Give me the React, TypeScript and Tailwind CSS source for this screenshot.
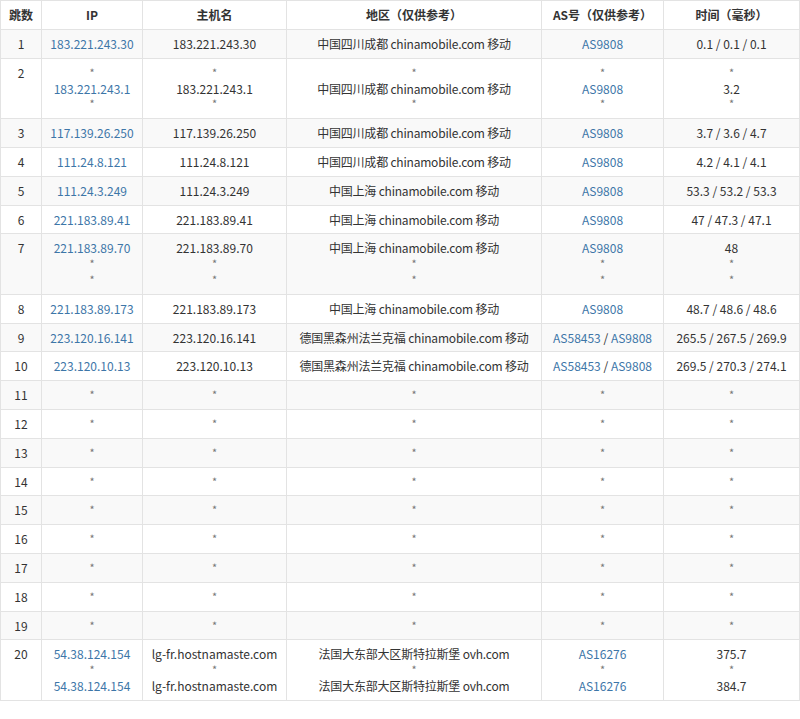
const S = "*";
type Cell = string[];
type Row = { n: number; ip: Cell; host: Cell; region: Cell; as: (string[] | string)[]; time: Cell };
const r1 = (ip: string, host: string, region: string, as: string[] | string, time: string): Row => ({ n: 0, ip: [ip], host: [host], region: [region], as: [as], time: [time] });
const CD = "中国四川成都 chinamobile.com 移动";
const SH = "中国上海 chinamobile.com 移动";
const DE = "德国黑森州法兰克福 chinamobile.com 移动";
const FR = "法国大东部大区斯特拉斯堡 ovh.com";
const rows: Row[] = [
  r1("183.221.243.30", "183.221.243.30", CD, ["AS9808"], "0.1 / 0.1 / 0.1"),
  { n: 0, ip: [S, "183.221.243.1", S], host: [S, "183.221.243.1", S], region: [S, CD, S], as: [S, ["AS9808"], S], time: [S, "3.2", S] },
  r1("117.139.26.250", "117.139.26.250", CD, ["AS9808"], "3.7 / 3.6 / 4.7"),
  r1("111.24.8.121", "111.24.8.121", CD, ["AS9808"], "4.2 / 4.1 / 4.1"),
  r1("111.24.3.249", "111.24.3.249", SH, ["AS9808"], "53.3 / 53.2 / 53.3"),
  r1("221.183.89.41", "221.183.89.41", SH, ["AS9808"], "47 / 47.3 / 47.1"),
  { n: 0, ip: ["221.183.89.70", S, S], host: ["221.183.89.70", S, S], region: [SH, S, S], as: [["AS9808"], S, S], time: ["48", S, S] },
  r1("221.183.89.173", "221.183.89.173", SH, ["AS9808"], "48.7 / 48.6 / 48.6"),
  r1("223.120.16.141", "223.120.16.141", DE, ["AS58453", "AS9808"], "265.5 / 267.5 / 269.9"),
  r1("223.120.10.13", "223.120.10.13", DE, ["AS58453", "AS9808"], "269.5 / 270.3 / 274.1"),
  ...Array.from({ length: 9 }, () => r1(S, S, S, S, S)),
  { n: 0, ip: ["54.38.124.154", S, "54.38.124.154"], host: ["lg-fr.hostnamaste.com", S, "lg-fr.hostnamaste.com"], region: [FR, S, FR], as: [["AS16276"], S, ["AS16276"]], time: ["375.7", S, "384.7"] },
];

const Lines = ({ c, link }: { c: Cell; link?: boolean }) => (
  <>
    {c.map((t, i) => (
      <div key={i} className={t === S ? "text-[#777] text-[11px]" : link ? "text-[#3d76a8]" : ""}>{t}</div>
    ))}
  </>
);

const td = "border border-[#e3e3e3] px-2 pt-[6px] pb-[6px] align-top text-center leading-[15.8px]";

export default function App() {
  return (
    <div className="w-[800px] h-[719px] bg-white overflow-hidden" style={{ fontFamily: '"Noto Sans CJK SC", "Noto Sans", sans-serif' }}>
      <table className="w-[800px] border-collapse text-[12px] text-[#333] table-fixed">
        <colgroup>
          <col className="w-[41px]" /><col className="w-[101px]" /><col className="w-[144px]" /><col className="w-[255px]" /><col className="w-[122px]" /><col />
        </colgroup>
        <thead>
          <tr className="h-[29px]">
            {["跳数", "IP", "主机名", "地区（仅供参考）", "AS号（仅供参考）", "时间（毫秒）"].map((h) => (
              <th key={h} className="border border-[#e3e3e3] font-bold text-center px-1">{h}</th>
            ))}
          </tr>
        </thead>
        <tbody>
          {rows.map((r, i) => (
            <tr key={i} className={i % 2 === 0 ? "bg-[#f9f9f9]" : "bg-white"}>
              <td className={td}>{i + 1}</td>
              <td className={td}><Lines c={r.ip} link /></td>
              <td className={td}><Lines c={r.host} /></td>
              <td className={td + " tracking-[-0.2px]"}><Lines c={r.region} /></td>
              <td className={td}>
                {r.as.map((a, j) =>
                  typeof a === "string" ? (
                    <div key={j} className="text-[#777] text-[11px]">{a}</div>
                  ) : (
                    <div key={j}>
                      {a.map((x, k) => (
                        <span key={k}>{k > 0 && " / "}<span className="text-[#3d76a8]">{x}</span></span>
                      ))}
                    </div>
                  )
                )}
              </td>
              <td className={td}><Lines c={r.time} /></td>
            </tr>
          ))}
        </tbody>
      </table>
    </div>
  );
}
